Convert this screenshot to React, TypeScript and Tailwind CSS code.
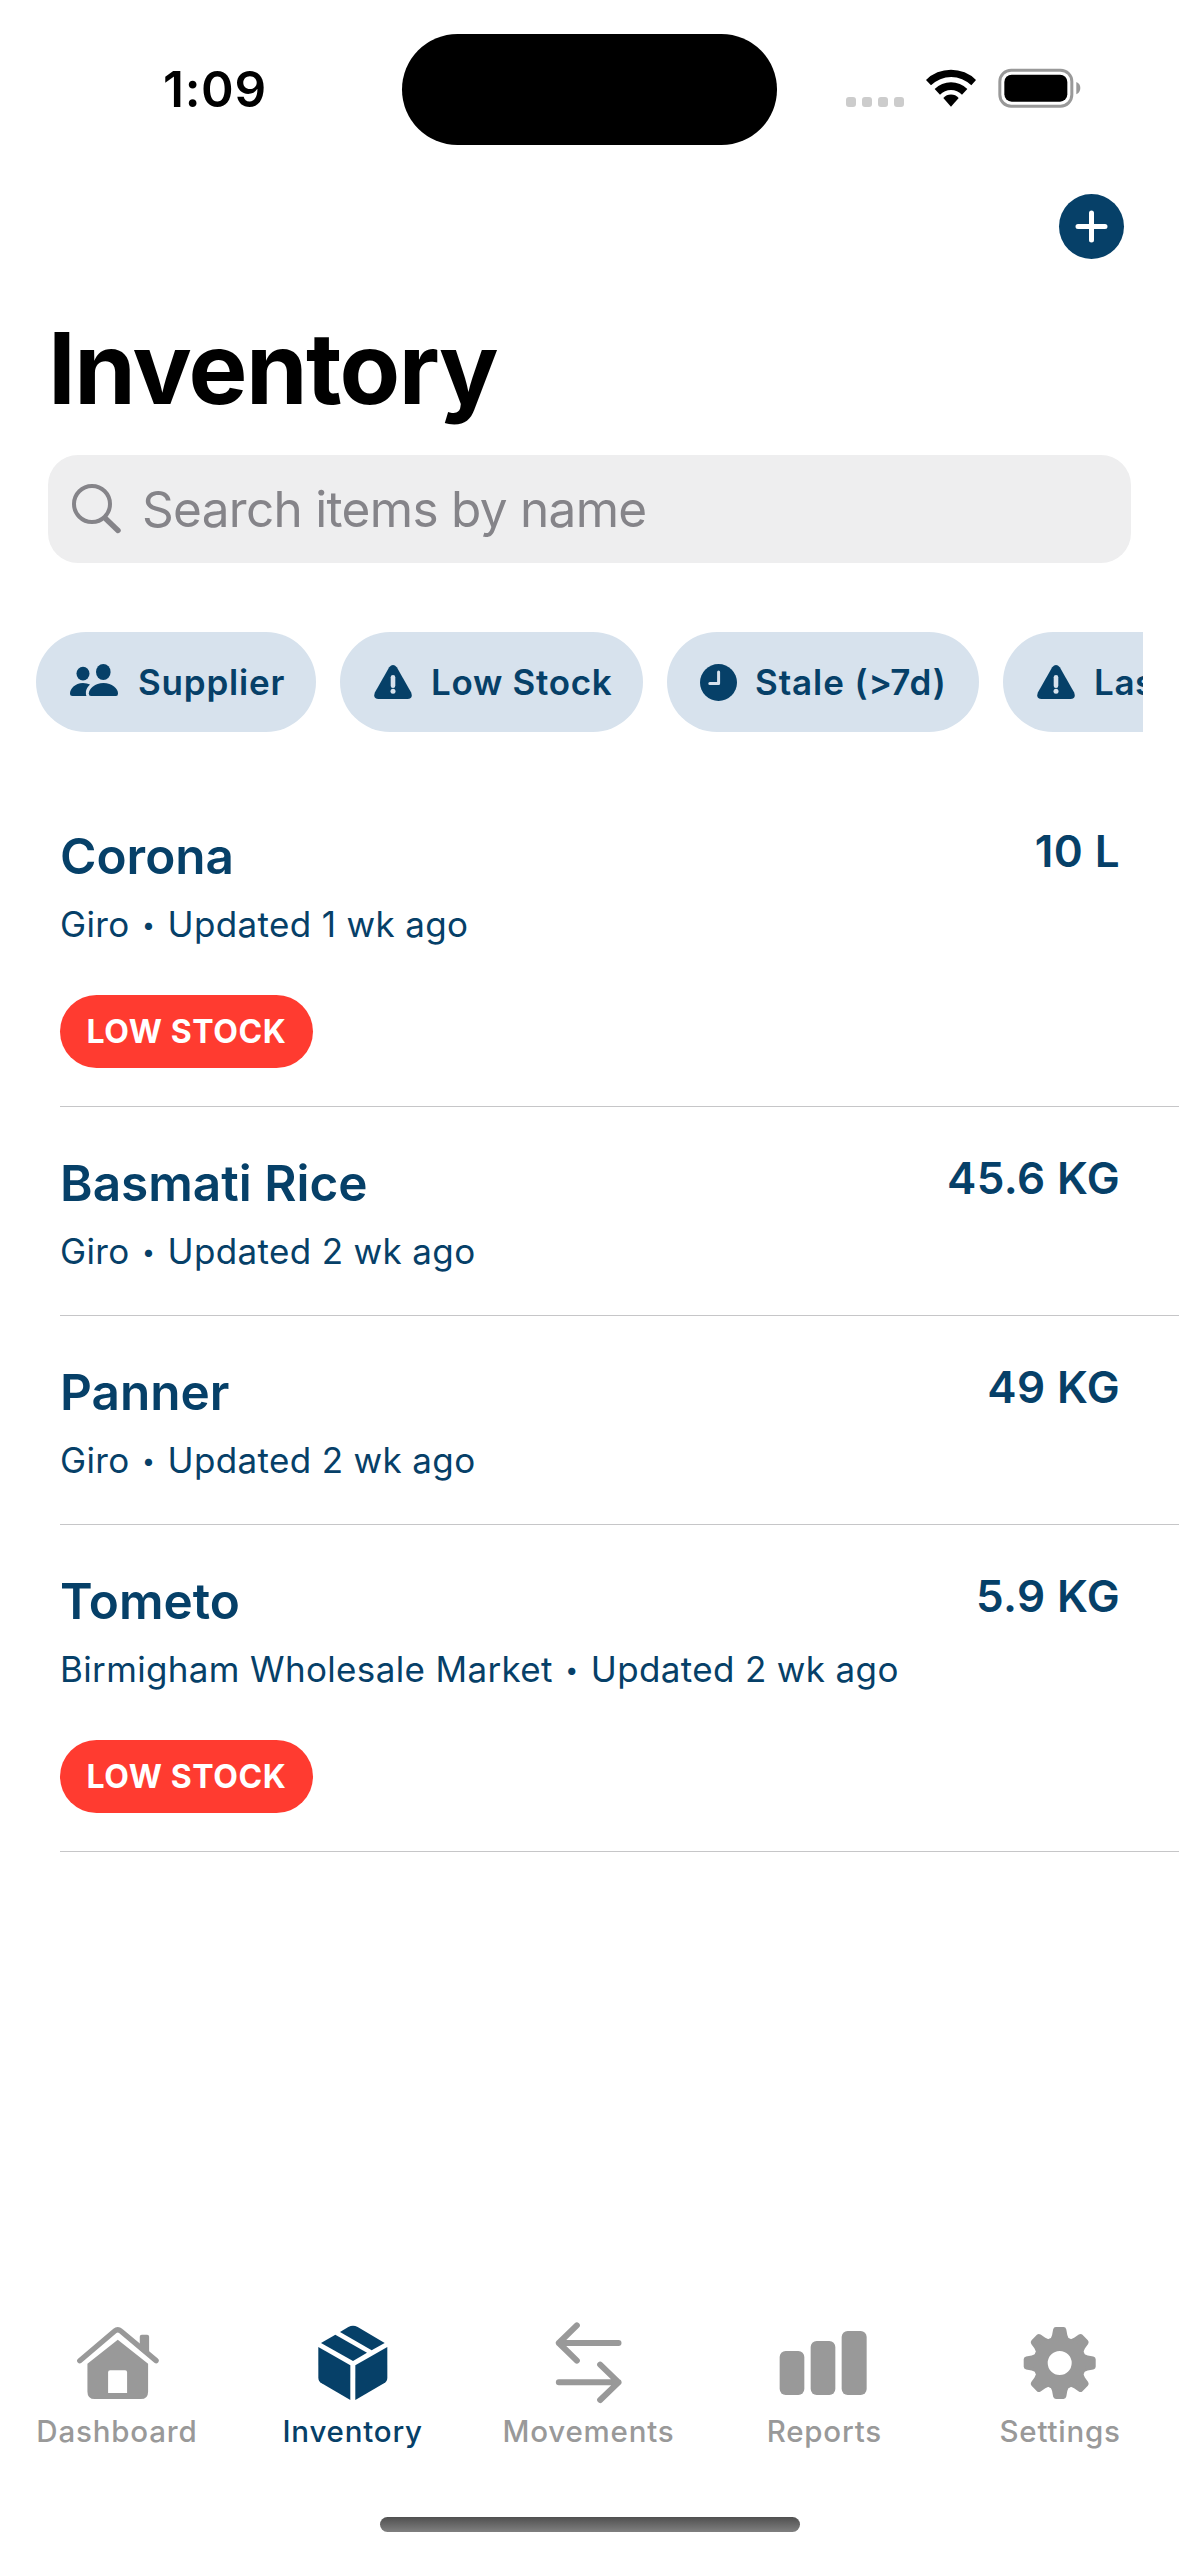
import React from 'react';
import type { ReactNode } from 'react';

function WifiIcon() {
  return (
    <svg width="52" height="40" viewBox="316 52 156 120" className="block fill-black">
      <path d="M319 88A106 106 0 0 1 469 88L455 104A86 86 0 0 0 334 104Z" />
      <path d="M345 115A70 70 0 0 1 443 115L427 132A46 46 0 0 0 361 132Z" />
      <path d="M371 142A31 31 0 0 1 417 142L394 168Z" />
    </svg>
  );
}

function BatteryIcon() {
  return (
    <svg width="83" height="40" viewBox="536 52 249 120" className="block">
      <rect x="541.5" y="58.5" width="216" height="108" rx="34" fill="none" stroke="#999999" strokeWidth="9" />
      <rect x="555" y="72" width="189" height="81" rx="22" fill="#000000" />
      <path d="M771 94Q783 99 783 112Q783 125 771 131Z" fill="#999999" />
    </svg>
  );
}

function StatusBar() {
  return (
    <header className="flex h-[144.5px] items-end">
      <div className="flex h-[111px] w-[402px] items-center pb-px pl-[163px]">
        <span className="text-[49.5px] leading-[60px] font-semibold tracking-[0.7px] text-black">1:09</span>
      </div>
      <div className="h-[111px] w-[375px] rounded-full bg-black" />
      <div className="flex h-[111px] items-center pb-[3px] pl-[69px]">
        <div className="flex gap-[6px] pt-[28px]">
          <i className="size-[10px] rounded-[3px] bg-[#cccccc]" />
          <i className="size-[10px] rounded-[3px] bg-[#cccccc]" />
          <i className="size-[10px] rounded-[3px] bg-[#cccccc]" />
          <i className="size-[10px] rounded-[3px] bg-[#cccccc]" />
        </div>
        <div className="ml-[21px]">
          <WifiIcon />
        </div>
        <div className="ml-[21px]">
          <BatteryIcon />
        </div>
      </div>
    </header>
  );
}

function PeopleIcon() {
  return (
    <svg width="48" height="37" viewBox="0 0 48 37" className="block shrink-0 fill-current">
      <ellipse cx="33.3" cy="8" rx="7.3" ry="8" />
      <ellipse cx="13" cy="9.6" rx="6.5" ry="6.9" />
      <path d="M21 32Q18.8 32 18.8 29.5C19 24.5 25 19 33.5 19C42 19 48 24.5 48 29.5Q48 32 46 32Z" />
      <path d="M2.5 32Q0 32 0 29.5C0 25 5 19 13 19Q17 19 20 20.5Q15.5 25 15.9 29Q15.8 31 16.5 32Z" />
    </svg>
  );
}

function WarningIcon() {
  return (
    <svg width="38" height="37" viewBox="0 0 38 37" className="block shrink-0">
      <path
        d="M15.2 3.2Q19 -1.2 22.8 3.2L37 28.2Q39.6 34.6 33.4 35H4.6Q-1.6 34.6 1 28.2Z"
        fill="currentColor"
      />
      <rect x="16.7" y="11" width="4.6" height="13" rx="2.3" fill="#d7e2ed" />
      <circle cx="19" cy="27.3" r="2.5" fill="#d7e2ed" />
    </svg>
  );
}

function ClockIcon() {
  return (
    <svg width="37" height="37" viewBox="0 0 37 37" className="block shrink-0">
      <circle cx="18.5" cy="18.5" r="18.5" fill="currentColor" />
      <path d="M18.6 8V19.5H9.8" fill="none" stroke="#d7e2ed" strokeWidth="3" strokeLinecap="round" strokeLinejoin="round" />
    </svg>
  );
}

function Chip({ icon, label, className }: { icon: ReactNode; label: string; className: string }) {
  return (
    <button
      className={`flex h-[100px] shrink-0 items-center rounded-full bg-[#d7e2ed] text-[#064068] ${className}`}
    >
      {icon}
      <span className="text-[35px] leading-[44px] font-semibold whitespace-nowrap">{label}</span>
    </button>
  );
}

type Item = { name: string; supplier: string; updated: string; qty: string; low: boolean };

const items: Item[] = [
  { name: 'Corona', supplier: 'Giro', updated: 'Updated 1 wk ago', qty: '10 L', low: true },
  { name: 'Basmati Rice', supplier: 'Giro', updated: 'Updated 2 wk ago', qty: '45.6 KG', low: false },
  { name: 'Panner', supplier: 'Giro', updated: 'Updated 2 wk ago', qty: '49 KG', low: false },
  { name: 'Tometo', supplier: 'Birmigham Wholesale Market', updated: 'Updated 2 wk ago', qty: '5.9 KG', low: true },
];

function Row({ item }: { item: Item }) {
  return (
    <li
      className={`ml-[60px] flex justify-between border-b border-[#c6c6c8] pr-[60px] text-[#064068] ${
        item.low ? 'h-[327px]' : 'h-[209px]'
      }`}
    >
      <div className="flex flex-col items-start pt-[46px]">
        <h2 className="text-[49.5px] leading-[60px] font-semibold">{item.name}</h2>
        <p className="mt-[15px] flex items-center text-[35px] leading-[47px] tracking-[0.35px]">
          <span>{item.supplier}</span>
          <span className="w-[38px] text-center text-[23px] leading-[47px] tracking-normal">
            <span className="relative top-px">•</span>
          </span>
          <span>{item.updated}</span>
        </p>
        {item.low && (
          <span className="mt-[47px] flex h-[73px] w-[253px] items-center justify-center rounded-full bg-[#ff3b30] pt-px text-[32px] leading-[40px] font-bold tracking-[0.6px] text-white">
            LOW STOCK
          </span>
        )}
      </div>
      <span className="mt-[41px] -mr-px text-[44px] leading-[60px] font-semibold tracking-[0.4px]">{item.qty}</span>
    </li>
  );
}

function HomeIcon() {
  return (
    <svg width="100" height="90" viewBox="23.7 24 300 270" className="block fill-current">
      <path d="M59 152L164 63Q173 55 182 63L288 152" fill="none" stroke="currentColor" strokeWidth="16" strokeLinecap="round" strokeLinejoin="round" />
      <path d="M239 120V80Q239 74 245 74H261Q267 74 267 80V140Z" />
      <path
        fillRule="evenodd"
        d="M173 89L264 161V245Q264 267 242 267H104Q82 267 82 245V161ZM150 181Q144 181 144 187V249H201V187Q201 181 195 181Z"
      />
    </svg>
  );
}

function BoxIcon() {
  return (
    <svg width="100" height="90" viewBox="731 24 300 270" className="block fill-current">
      <path d="M774 111L870 166V270L784 220Q774 214 774 203Z" />
      <path d="M981 111L885 166V270L971 220Q981 214 981 203Z" />
      <path d="M782 99L825 74L920 128L878 153Z" />
      <path d="M839 66L864 51Q878 44 892 51L973 99L934 121Z" />
    </svg>
  );
}

function ArrowsIcon() {
  return (
    <svg
      width="100"
      height="90"
      viewBox="-1.5 24 300 270"
      className="block"
      fill="none"
      stroke="currentColor"
      strokeWidth="18"
      strokeLinecap="round"
      strokeLinejoin="round"
    >
      <path d="M237 99H58M112 46L58 99L112 152" />
      <path d="M58 217H237M182 164L237 217L182 270" />
    </svg>
  );
}

function BarsIcon() {
  return (
    <svg width="100" height="90" viewBox="706 24 300 270" className="block fill-current">
      <rect x="720" y="123" width="74" height="132" rx="18" />
      <rect x="813" y="93" width="74" height="162" rx="18" />
      <rect x="906" y="63" width="75" height="192" rx="18" />
    </svg>
  );
}

const TOOTH_ANGLES = [0, 45, 90, 135, 180, 225, 270, 315];

function GearIcon() {
  return (
    <svg width="100" height="90" viewBox="-48.7 -45 100 90" className="block fill-current">
      {TOOTH_ANGLES.map((angle) => (
        <path
          key={angle}
          transform={`rotate(${angle})`}
          d="M-9.5 -23L-7.6 -28L-6.6 -33.6Q-6 -36 -3.8 -36H3.8Q6 -36 6.6 -33.6L7.6 -28L9.5 -23Z"
        />
      ))}
      <circle r="19.2" fill="none" stroke="currentColor" strokeWidth="14.4" />
    </svg>
  );
}

function Tab({ icon, label, active = false }: { icon: ReactNode; label: string; active?: boolean }) {
  return (
    <button className={`flex flex-1 flex-col items-center ${active ? 'text-[#064068]' : 'text-[#999999]'}`}>
      {icon}
      <span className="mt-[3px] mr-[2px] text-[29.5px] leading-[40px] font-medium tracking-[0.8px]">{label}</span>
    </button>
  );
}

export default function App() {
  return (
    <div className="flex h-[2556px] w-[1179px] flex-col overflow-hidden bg-white font-['Inter','Liberation_Sans',sans-serif]">
      <StatusBar />

      <div className="mt-[49.5px] flex justify-end pr-[55px]">
        <button className="flex size-[65px] items-center justify-center rounded-full bg-[#064068]">
          <svg width="33" height="33" viewBox="0 0 33 33" className="block">
            <path d="M16.5 3V30M3 16.5H30" stroke="#ffffff" strokeWidth="5" strokeLinecap="round" />
          </svg>
        </button>
      </div>

      <h1 className="mt-[49px] pl-[48px] text-[99px] leading-[120px] font-bold tracking-[-1.6px] text-black">
        Inventory
      </h1>

      <div className="mx-12 mt-[27px] flex h-[108px] items-center rounded-[30px] bg-[#eeeeef] pl-6 text-[#858489]">
        <svg width="50" height="50" viewBox="0 0 50 50" className="block" fill="none" stroke="currentColor" strokeLinecap="round">
          <circle cx="20" cy="20" r="18" strokeWidth="4" />
          <path d="M34 35L46 46.5" strokeWidth="5.4" />
        </svg>
        <span className="ml-5 text-[49.5px] leading-[60px] tracking-[-0.7px]">Search items by name</span>
      </div>

      <div className="mx-9 mt-[69px] flex gap-6 overflow-hidden">
        <Chip icon={<PeopleIcon />} label="Supplier" className="w-[280px] gap-5 pl-[34px] tracking-[0.8px]" />
        <Chip icon={<WarningIcon />} label="Low Stock" className="w-[303px] gap-[19px] pl-[34px] tracking-[0.7px]" />
        <Chip icon={<ClockIcon />} label="Stale (>7d)" className="w-[312px] gap-[18px] pl-[33px] tracking-[0.9px]" />
        <Chip icon={<WarningIcon />} label="Last" className="w-[300px] gap-[19px] pl-[34px] tracking-[0.6px]" />
      </div>

      <ul className="mt-12">
        {items.map((item) => (
          <Row key={item.name} item={item} />
        ))}
      </ul>

      <nav className="mt-auto flex">
        <Tab icon={<HomeIcon />} label="Dashboard" />
        <Tab icon={<BoxIcon />} label="Inventory" active />
        <Tab icon={<ArrowsIcon />} label="Movements" />
        <Tab icon={<BarsIcon />} label="Reports" />
        <Tab icon={<GearIcon />} label="Settings" />
      </nav>

      <div className="mt-[66px] mb-6 h-[15px] w-[420px] self-center rounded-full bg-linear-to-b from-[#505050] to-[#808080]" />
    </div>
  );
}
